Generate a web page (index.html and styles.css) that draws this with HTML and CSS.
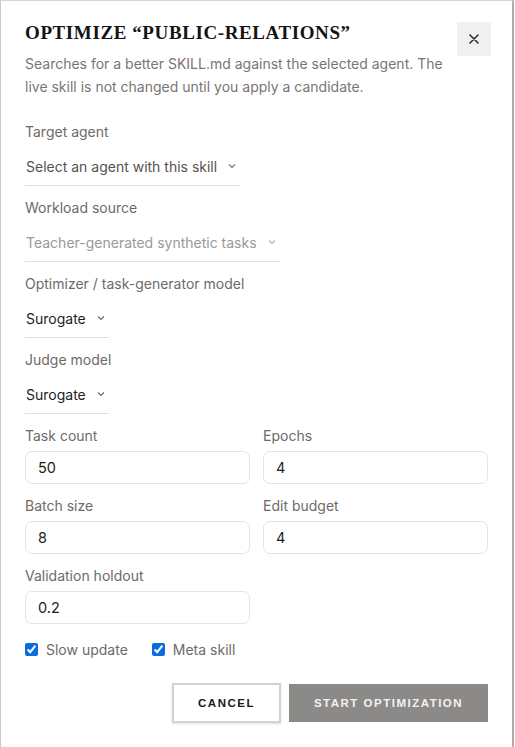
FILE: index.html
```html
<!DOCTYPE html>
<html lang="en">
<head>
<meta charset="utf-8">
<title>Optimize public-relations</title>
<link rel="stylesheet" href="styles.css">
</head>
<body>
<div class="modal">
  <div class="header">
    <div class="head-text">
      <h1 class="title">OPTIMIZE “PUBLIC-RELATIONS”</h1>
      <p class="desc">Searches for a better SKILL.md against the selected agent. The live skill is not changed until you apply a candidate.</p>
    </div>
    <button class="close" aria-label="Close">
      <svg width="10" height="10" viewBox="0 0 10 10"><path d="M1 1L9 9M9 1L1 9" stroke="#1b1b1b" stroke-width="1.4" stroke-linecap="round"/></svg>
    </button>
  </div>

  <div class="form">
    <div class="group">
      <div class="label">Target agent</div>
      <div class="select muted">Select an agent with this skill<svg class="chev" width="12" height="8" viewBox="0 0 12 8"><path d="M3 2.5L6 5.5L9 2.5" fill="none" stroke="currentColor" stroke-width="1.1"/></svg></div>
    </div>
    <div class="group">
      <div class="label">Workload source</div>
      <div class="select disabled">Teacher-generated synthetic tasks<svg class="chev" width="12" height="8" viewBox="0 0 12 8"><path d="M3 2.5L6 5.5L9 2.5" fill="none" stroke="currentColor" stroke-width="1.1"/></svg></div>
    </div>
    <div class="group">
      <div class="label">Optimizer / task-generator model</div>
      <div class="select">Surogate<svg class="chev" width="12" height="8" viewBox="0 0 12 8"><path d="M3 2.5L6 5.5L9 2.5" fill="none" stroke="#666" stroke-width="1.1"/></svg></div>
    </div>
    <div class="group">
      <div class="label">Judge model</div>
      <div class="select">Surogate<svg class="chev" width="12" height="8" viewBox="0 0 12 8"><path d="M3 2.5L6 5.5L9 2.5" fill="none" stroke="#666" stroke-width="1.1"/></svg></div>
    </div>

    <div class="grid">
      <div class="field">
        <div class="label">Task count</div>
        <div class="input">50</div>
      </div>
      <div class="field">
        <div class="label">Epochs</div>
        <div class="input">4</div>
      </div>
      <div class="field">
        <div class="label">Batch size</div>
        <div class="input">8</div>
      </div>
      <div class="field">
        <div class="label">Edit budget</div>
        <div class="input">4</div>
      </div>
      <div class="field">
        <div class="label">Validation holdout</div>
        <div class="input">0.2</div>
      </div>
    </div>

    <div class="checks">
      <label class="check"><input type="checkbox" checked><span>Slow update</span></label>
      <label class="check"><input type="checkbox" checked><span>Meta skill</span></label>
    </div>

    <div class="actions">
      <button class="btn cancel">CANCEL</button>
      <button class="btn start">START OPTIMIZATION</button>
    </div>
  </div>
</div>
</body>
</html>
```

FILE: styles.css
```css
* { box-sizing: border-box; }
html, body { margin: 0; padding: 0; background: #ffffff; }
body {
  width: 515px;
  height: 747px;
  overflow: hidden;
  font-family: Inter, "Noto Sans", sans-serif;
}
.modal {
  width: 514px;
  height: 747px;
  background: #fff;
  border-left: 1px solid #c9c9c9;
  border-top: 1px solid #d4d4d4;
  border-right: 2px solid #adadad;
  padding: 20px 24px 0 24px;
}
.header {
  display: flex;
  justify-content: space-between;
  align-items: flex-start;
}
.title {
  margin: 0;
  font-family: "Liberation Serif", "DejaVu Serif", serif;
  font-weight: 700;
  font-size: 19px;
  line-height: 24px;
  letter-spacing: 0.6px;
  color: #141414;
}
.desc {
  margin: 7px 0 0 0;
  font-size: 14px;
  line-height: 23px;
  color: #7a7573;
  width: 430px;
}
.close {
  width: 34px;
  height: 34px;
  margin-top: 1px;
  margin-right: -3px;
  border: none;
  background: #f1f0f0;
  display: flex;
  align-items: center;
  justify-content: center;
  padding: 0;
}
.form { margin-top: 24px; }
.group { margin-bottom: 12px; }
.label {
  font-size: 14px;
  line-height: 20px;
  color: #6e6a68;
}
.select {
  display: inline-flex;
  align-items: center;
  height: 36px;
  margin-top: 8px;
  padding: 0 2px 3px 1px;
  border-bottom: 1px solid #e3e1df;
  font-size: 14px;
  color: #1e1e1e;
}
.select.muted { color: #57524f; }
.select.disabled { color: #9c9896; }
.chev { margin-left: 9px; color: #777; }
.select.disabled .chev { color: #b8b4b2; }
.grid {
  display: grid;
  grid-template-columns: 1fr 1fr;
  column-gap: 13px;
  row-gap: 12px;
}
.field .label { margin-bottom: 5px; }
.input {
  height: 33px;
  border: 1px solid #e6e3e1;
  border-radius: 7px;
  padding: 0 12px;
  display: flex;
  align-items: center;
  font-size: 14.5px;
  color: #1e1e1e;
}
.checks {
  display: flex;
  gap: 24px;
  margin-top: 15px;
  height: 20px;
  align-items: center;
}
.check {
  display: inline-flex;
  align-items: center;
  font-size: 14px;
  color: #6e6a68;
}
.check input {
  margin: 0 8px 0 0;
  width: 13px;
  height: 13px;
  accent-color: #0b6be0;
}
.actions {
  display: flex;
  justify-content: flex-end;
  gap: 8px;
  margin-top: 24px;
}
.btn {
  font-family: "Liberation Sans", Arial, sans-serif;
  font-weight: 700;
  font-size: 11.5px;
  letter-spacing: 1.5px;
  height: 40px;
  padding: 0;
}
.cancel {
  width: 109px;
  background: #fff;
  color: #1a1a1a;
  border: 2px solid #d2d2d2;
  box-shadow: 0 1px 2px rgba(0,0,0,0.12);
}
.start {
  width: 199px;
  height: 38px;
  margin-top: 1px;
  background: #8c8a88;
  color: #f3f2f1;
  border: none;
}
```
